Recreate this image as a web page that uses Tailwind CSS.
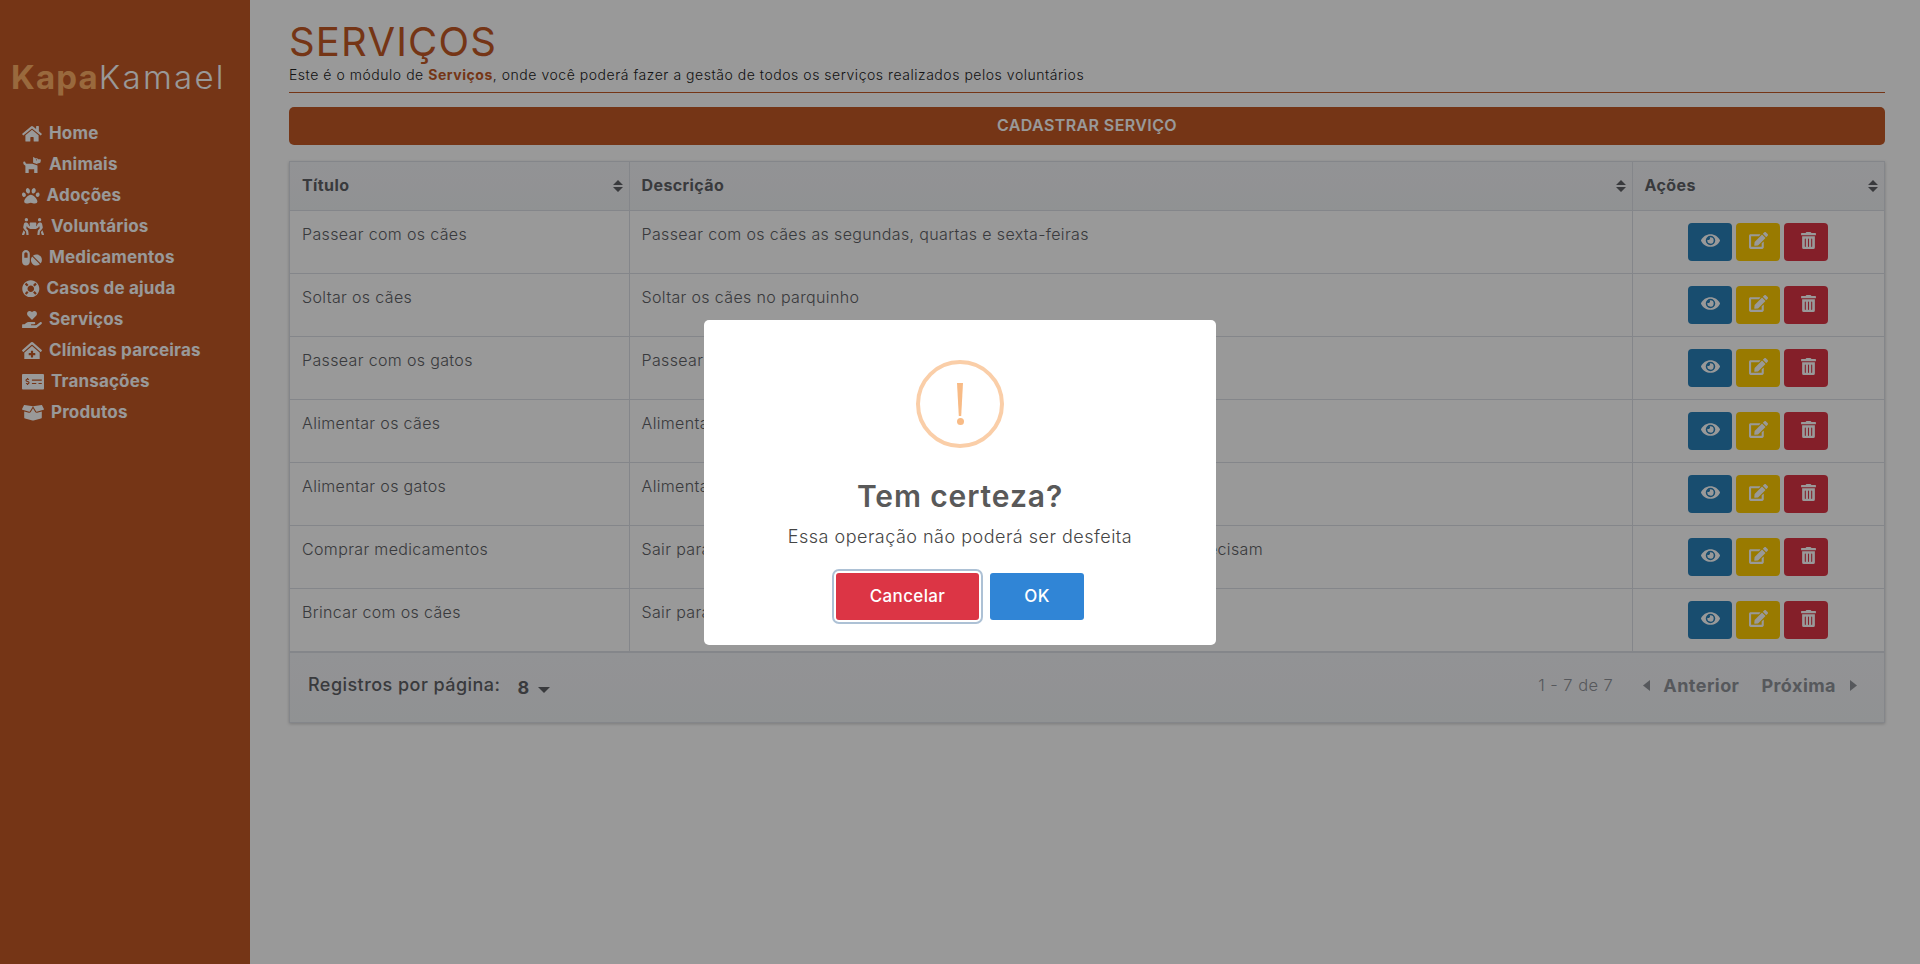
<!DOCTYPE html>
<html lang="pt-BR">
<head>
<meta charset="utf-8">
<title>Serviços</title>
<script src="https://cdn.jsdelivr.net/npm/@tailwindcss/browser@4"></script>
</head>
<body class="font-['Inter','Liberation_Sans',sans-serif] bg-white">
<svg class="hidden">
  <symbol id="eye" viewBox="0 0 576 512"><path d="M572.52 241.4C518.29 135.59 410.93 64 288 64S57.68 135.64 3.48 241.41a32.35 32.35 0 0 0 0 29.19C57.71 376.41 165.07 448 288 448s230.32-71.64 284.52-177.41a32.35 32.35 0 0 0 0-29.19zM288 400a144 144 0 1 1 144-144 143.93 143.93 0 0 1-144 144zm0-240a95.31 95.31 0 0 0-25.31 3.79 47.85 47.85 0 0 1-66.9 66.9A95.78 95.78 0 1 0 288 160z"/></symbol>
  <symbol id="edit" viewBox="0 0 576 512"><path d="M402.6 83.2l90.2 90.2c3.8 3.8 3.8 10 0 13.8L274.4 405.6l-92.8 10.3c-12.4 1.4-22.9-9.1-21.5-21.5l10.3-92.8L388.8 83.2c3.8-3.8 10-3.8 13.8 0zm162-22.9l-48.8-48.8c-15.2-15.2-39.9-15.2-55.2 0l-35.4 35.4c-3.8 3.8-3.8 10 0 13.8l90.2 90.2c3.8 3.8 10 3.8 13.8 0l35.4-35.4c15.2-15.3 15.2-40 0-55.2zM384 346.2V448H64V128h229.8c3.2 0 6.2-1.3 8.5-3.5l40-40c7.6-7.6 2.2-20.5-8.5-20.5H48C21.5 64 0 85.5 0 112v352c0 26.5 21.5 48 48 48h352c26.5 0 48-21.5 48-48V306.2c0-10.7-12.9-16-20.5-8.5l-40 40c-2.2 2.3-3.5 5.3-3.5 8.5z"/></symbol>
  <symbol id="trash" viewBox="0 0 448 512"><path d="M32 464a48 48 0 0 0 48 48h288a48 48 0 0 0 48-48V128H32zm272-256a16 16 0 0 1 32 0v224a16 16 0 0 1-32 0zm-96 0a16 16 0 0 1 32 0v224a16 16 0 0 1-32 0zm-96 0a16 16 0 0 1 32 0v224a16 16 0 0 1-32 0zM432 32H312l-9.4-18.7A24 24 0 0 0 281.1 0H166.8a23.72 23.72 0 0 0-21.4 13.3L136 32H16A16 16 0 0 0 0 48v32a16 16 0 0 0 16 16h416a16 16 0 0 0 16-16V48a16 16 0 0 0-16-16z"/></symbol>
  <symbol id="sort" viewBox="0 0 10 12"><path d="M5 0l5 5H0zM5 12L0 7h10z"/></symbol>
</svg>
<div class="relative flex h-[964px] w-[1920px] overflow-hidden">
  <aside class="w-[250px] shrink-0 bg-[#c35926] text-white">
    <div class="pl-[11px] pt-[55px] text-[33px] leading-[44px] tracking-[0.035em] h-[118px]"><span class="font-bold text-[#ffb066]">Kapa</span><span class="font-light tracking-[0.07em]">Kamael</span></div>
    <nav class="pl-[22px] text-[17px] font-bold tracking-[0.01em]">
      <a class="flex items-center h-[31px]"><svg class="h-[17.6px] w-[20px] fill-white" viewBox="0 0 576 512"><path d="M280.37 148.26L96 300.11V464a16 16 0 0 0 16 16l112.06-.29a16 16 0 0 0 15.92-16V368a16 16 0 0 1 16-16h64a16 16 0 0 1 16 16v95.64a16 16 0 0 0 16 16.05L464 480a16 16 0 0 0 16-16V300L295.67 148.26a12.19 12.19 0 0 0-15.3 0zM571.6 251.47L488 182.56V44.05a12 12 0 0 0-12-12h-56a12 12 0 0 0-12 12v72.61L318.47 43a48 48 0 0 0-61 0L4.34 251.47a12 12 0 0 0-1.6 16.9l25.5 31A12 12 0 0 0 45.15 301l235.22-193.74a12.19 12.19 0 0 1 15.3 0L530.9 301a12 12 0 0 0 16.9-1.6l25.5-31a12 12 0 0 0-1.7-16.93z"/></svg><span class="ml-[7px]">Home</span></a>
      <a class="flex items-center h-[31px]"><svg class="h-[17.6px] w-[20px] fill-white" viewBox="0 0 576 512"><path d="M298.06,224,448,277.55V496a16,16,0,0,1-16,16H368a16,16,0,0,1-16-16V384H192V496a16,16,0,0,1-16,16H112a16,16,0,0,1-16-16V282.09C58.84,268.84,32,233.66,32,192a32,32,0,0,1,64,0,32.06,32.06,0,0,0,32,32ZM544,112v32a64,64,0,0,1-64,64H448v35.58L320,197.87V48c0-14.25,17.22-21.39,27.31-11.31L374.59,64h53.63c10.91,0,23.75,7.92,28.62,17.69L464,96h64A16,16,0,0,1,544,112Zm-112,0a16,16,0,1,0-16,16A16,16,0,0,0,432,112Z"/></svg><span class="ml-[7px]">Animais</span></a>
      <a class="flex items-center h-[31px]"><svg class="h-[17.6px] w-[17.6px] fill-white" viewBox="0 0 512 512"><path d="M256 224c-79.41 0-192 122.76-192 200.25 0 34.9 26.81 55.75 71.74 55.75 48.84 0 81.09-25.08 120.26-25.08 39.51 0 71.85 25.08 120.26 25.08 44.93 0 71.74-20.85 71.74-55.75C448 346.76 335.41 224 256 224zm-147.28-12.61c-10.4-34.65-42.44-57.09-71.56-50.13-29.12 6.96-44.29 40.69-33.89 75.34 10.4 34.65 42.44 57.09 71.56 50.13 29.12-6.96 44.29-40.69 33.89-75.34zm84.72-20.78c30.94-8.14 46.42-49.94 34.58-93.36s-46.52-72.01-77.46-63.87-46.42 49.94-34.58 93.36c11.84 43.42 46.52 72.02 77.46 63.87zm281.39-29.34c-29.12-6.96-61.15 15.48-71.56 50.13-10.4 34.65 4.77 68.38 33.89 75.34 29.12 6.96 61.15-15.48 71.56-50.13 10.4-34.65-4.77-68.38-33.89-75.34zm-156.27 29.34c30.94 8.14 65.62-20.45 77.46-63.87 11.84-43.42-3.64-85.21-34.58-93.36s-65.62 20.45-77.46 63.87c-11.84 43.42 3.64 85.22 34.58 93.36z"/></svg><span class="ml-[7px]">Adoções</span></a>
      <a class="flex items-center h-[31px]"><svg class="h-[17.6px] w-[22px] fill-white" viewBox="0 0 640 512"><path d="M128 96c26.5 0 48-21.5 48-48S154.5 0 128 0 80 21.5 80 48s21.5 48 48 48zm384 0c26.5 0 48-21.5 48-48S538.5 0 512 0s-48 21.5-48 48 21.5 48 48 48zm125.7 372.1l-44-110-41.1 46.4-2 18.2 27.7 69.2c5 12.5 17 20.1 29.7 20.1 4 0 8-.7 11.9-2.3 16.4-6.6 24.4-25.2 17.8-41.6zm-34.2-209.8L585 178.1c-4.6-20-18.6-36.8-37.5-44.9-18.5-8-39-6.7-56.1 3.3-22.7 13.4-39.7 34.5-48.1 59.4L432 229.8 416 240v-96c0-8.8-7.2-16-16-16H240c-8.8 0-16 7.2-16 16v96l-16.1-10.2-11.3-33.9c-8.3-25-25.4-46-48.1-59.4-17.2-10-37.6-11.3-56.1-3.3-18.9 8.1-32.9 24.9-37.5 44.9l-18.4 80.2c-4.6 20 .7 41.2 14.4 56.7l67.2 75.9 10.1 92.6C130 499.8 143.8 512 160 512c1.2 0 2.3-.1 3.5-.2 17.6-1.9 30.2-17.7 28.3-35.3l-10.1-92.8c-1.5-13-6.9-25.1-15.6-35l-43.3-49 17.6-70.3 6.8 20.4c4.1 12.5 11.9 23.4 24.5 32.6l51.1 32.5c4.6 2.9 12.1 4.6 17.2 5h160c5.1-.4 12.6-2.1 17.2-5l51.1-32.5c12.6-9.2 20.4-20 24.5-32.6l6.8-20.4 17.6 70.3-43.3 49c-8.7 9.9-14.1 22-15.6 35l-10.1 92.8c-1.9 17.6 10.7 33.4 28.3 35.3 1.2.1 2.3.2 3.5.2 16.1 0 29.9-12.2 31.8-28.5l10.1-92.6 67.2-75.9c13.6-15.5 19-36.7 14.4-56.7zM46.3 358.1l-44 110c-6.6 16.4 1.4 35 17.8 41.6 16.8 6.6 35.1-1.7 41.6-17.8l27.7-69.2-2-18.2-41.1-46.4z"/></svg><span class="ml-[7px]">Voluntários</span></a>
      <a class="flex items-center h-[31px]"><svg class="h-[17.6px] w-[20px] fill-white" viewBox="0 0 576 512"><path d="M112 32C50.1 32 0 82.1 0 144v224c0 61.9 50.1 112 112 112s112-50.1 112-112V144c0-61.9-50.1-112-112-112zm48 224H64V144c0-26.5 21.5-48 48-48s48 21.5 48 48v112zm139.7-29.7c-3.5-3.5-9.4-3.1-12.3.8-45.3 62.5-40.4 150.1 15.9 206.4 56.3 56.3 143.9 61.2 206.4 15.9 4-2.9 4.3-8.8.8-12.3L299.7 226.3zm229.8-19c-56.3-56.3-143.9-61.2-206.4-15.9-4 2.9-4.3 8.8-.8 12.3l210.8 210.8c3.5 3.5 9.4 3.1 12.3-.8 45.3-62.6 40.5-150.1-15.9-206.4z"/></svg><span class="ml-[7px]">Medicamentos</span></a>
      <a class="flex items-center h-[31px]"><svg class="h-[17.6px] w-[17.6px] fill-white" viewBox="0 0 512 512"><path d="M256 8C119.033 8 8 119.033 8 256s111.033 248 248 248 248-111.033 248-248S392.967 8 256 8zm173.696 119.559l-63.399 63.399c-10.987-18.559-26.67-34.252-45.255-45.255l63.399-63.399a218.396 218.396 0 0 1 45.255 45.255zM256 352c-53.019 0-96-42.981-96-96s42.981-96 96-96 96 42.981 96 96-42.981 96-96 96zM127.559 82.304l63.399 63.399c-18.559 10.987-34.252 26.67-45.255 45.255l-63.399-63.399a218.372 218.372 0 0 1 45.255-45.255zM82.304 384.441l63.399-63.399c10.987 18.559 26.67 34.252 45.255 45.255l-63.399 63.399a218.396 218.396 0 0 1-45.255-45.255zm302.137 45.255l-63.399-63.399c18.559-10.987 34.252-26.67 45.255-45.255l63.399 63.399a218.403 218.403 0 0 1-45.255 45.255z"/></svg><span class="ml-[7px]">Casos de ajuda</span></a>
      <a class="flex items-center h-[31px]"><svg class="h-[17.6px] w-[20px] fill-white" viewBox="0 0 576 512"><path d="M275.3 250.5c7 7.4 18.4 7.4 25.5 0l108.9-114.2c31.6-33.2 29.8-88.2-5.6-118.8-30.8-26.7-76.7-21.9-104.9 7.7L288 36.9l-11.1-11.6C248.7-4.4 202.8-9.2 172 17.5c-35.3 30.6-37.2 85.6-5.6 118.8l108.9 114.2zm290 77.6c-11.8-10.7-30.2-10-42.6 0L430.3 402c-11.3 9.1-25.4 14-40 14H272c-8.8 0-16-7.2-16-16s7.2-16 16-16h78.3c15.9 0 30.7-10.9 33.3-26.6 3.3-20-12.1-37.4-31.6-37.4H192c-27 0-53.1 9.3-74.1 26.3L71.4 384H16c-8.8 0-16 7.2-16 16v96c0 8.8 7.2 16 16 16h356.8c14.5 0 28.6-4.9 40-14l151.2-121c15.2-12.1 16.4-35 1.3-48.9z"/></svg><span class="ml-[7px]">Serviços</span></a>
      <a class="flex items-center h-[31px]"><svg class="h-[17.6px] w-[20px] fill-white" viewBox="0 0 576 512"><path d="M288 115L69.47 307.71c-1.62 1.46-3.69 2.14-5.47 3.35V496a16 16 0 0 0 16 16h416a16 16 0 0 0 16-16V311.1c-1.7-1.16-3.72-1.82-5.26-3.2zm96 261a8 8 0 0 1-8 8h-56v56a8 8 0 0 1-8 8h-48a8 8 0 0 1-8-8v-56h-56a8 8 0 0 1-8-8v-48a8 8 0 0 1 8-8h56v-56a8 8 0 0 1 8-8h48a8 8 0 0 1 8 8v56h56a8 8 0 0 1 8 8zm186.69-139.72l-255.94-226a39.85 39.85 0 0 0-53.45 0l-256 226a16 16 0 0 0-1.21 22.6L25.5 282.7a16 16 0 0 0 22.6 1.21L277.42 81.63a16 16 0 0 1 21.17 0L527.91 283.9a16 16 0 0 0 22.6-1.21l21.4-23.82a16 16 0 0 0-1.22-22.59z"/></svg><span class="ml-[7px]">Clínicas parceiras</span></a>
      <a class="flex items-center h-[31px]"><svg class="h-[17.6px] w-[22px] fill-white" viewBox="0 0 640 512"><path d="M608 32H32C14.33 32 0 46.33 0 64v384c0 17.67 14.33 32 32 32h576c17.67 0 32-14.33 32-32V64c0-17.67-14.33-32-32-32zM176 327.88V344c0 4.42-3.58 8-8 8h-16c-4.42 0-8-3.58-8-8v-16.29c-11.29-.58-22.27-4.52-31.37-11.35-3.9-2.93-4.1-8.77-.57-12.14l11.75-11.21c2.77-2.64 6.89-2.76 10.13-.73 3.87 2.42 8.26 3.72 12.82 3.72h28.11c6.5 0 11.8-5.92 11.8-13.19 0-5.95-3.61-11.19-8.77-12.73l-45-13.5c-18.59-5.58-31.58-23.42-31.58-43.39 0-24.52 19.05-44.44 42.67-45.07V152c0-4.42 3.58-8 8-8h16c4.42 0 8 3.58 8 8v16.29c11.29.58 22.27 4.51 31.37 11.35 3.9 2.93 4.1 8.77.57 12.14l-11.75 11.21c-2.77 2.64-6.89 2.76-10.13.73-3.87-2.43-8.26-3.72-12.82-3.72h-28.11c-6.5 0-11.8 5.92-11.8 13.19 0 5.95 3.61 11.19 8.77 12.73l45 13.5c18.59 5.58 31.58 23.42 31.58 43.39 0 24.53-19.05 44.44-42.67 45.07zM416 312c0 4.42-3.58 8-8 8H296c-4.42 0-8-3.58-8-8v-16c0-4.42 3.58-8 8-8h112c4.42 0 8 3.58 8 8v16zm160 0c0 4.42-3.58 8-8 8h-80c-4.42 0-8-3.58-8-8v-16c0-4.42 3.58-8 8-8h80c4.42 0 8 3.58 8 8v16zm0-96c0 4.42-3.58 8-8 8H296c-4.42 0-8-3.58-8-8v-16c0-4.42 3.58-8 8-8h272c4.42 0 8 3.58 8 8v16z"/></svg><span class="ml-[7px]">Transações</span></a>
      <a class="flex items-center h-[31px]"><svg class="h-[17.6px] w-[22px] fill-white" viewBox="0 0 640 512"><path d="M425.7 256c-16.9 0-32.8-9-41.4-23.4L320 126l-64.2 106.6c-8.7 14.5-24.6 23.5-41.5 23.5-4.5 0-9-.6-13.3-1.9L64 215v178c0 14.7 10 27.5 24.2 31l216.2 54.1c10.2 2.5 20.9 2.5 31 0L551.8 424c14.2-3.6 24.2-16.4 24.2-31V215l-137 39.1c-4.3 1.3-8.8 1.9-13.3 1.9zm212.6-112.2L586.8 41c-3.1-6.2-9.8-9.8-16.7-8.9L320 64l91.7 152.1c3.8 6.3 11.4 9.3 18.5 7.3l197.9-56.5c9.9-2.9 14.7-13.9 10.2-23.1zM53.2 41L1.7 143.8c-4.6 9.2.3 20.2 10.1 23l197.9 56.5c7.1 2 14.7-1 18.5-7.3L320 64 69.8 32.1c-6.9-.8-13.5 2.7-16.6 8.9z"/></svg><span class="ml-[7px]">Produtos</span></a>
    </nav>
  </aside>

  <main class="flex-1 pl-[39px] pr-[35px]">
    <h1 class="pt-[20px] text-[40px] leading-[44px] font-normal text-[#c35926] tracking-[0.03em]">SERVIÇOS</h1>
    <p class="pt-[1px] text-[14px] leading-[20px] font-light text-[#222] tracking-[0.038em] h-[28px]">Este é o módulo de <b class="font-bold text-[#c35926]">Serviços</b>, onde você poderá fazer a gestão de todos os serviços realizados pelos voluntários</p>
    <div class="border-t border-[#c35926]"></div>
    <button class="mt-[14px] block w-full h-[38px] pb-[2px] rounded-[5px] bg-[#c35926] text-white font-semibold text-[16px] tracking-[0.025em]">CADASTRAR SERVIÇO</button>

    <div class="mt-[16px] border border-[#dcdfe6] shadow-[0_1px_3px_rgba(0,0,0,0.2)] text-[#606266] text-[16px] tracking-[0.022em]">
      <table class="w-full table-fixed border-collapse">
        <colgroup><col class="w-[339px]"><col><col class="w-[252px]"></colgroup>
        <thead>
          <tr class="h-[48px] bg-linear-to-b from-[#f4f5f8] to-[#f1f3f6] text-left tracking-[0.025em]">
            <th class="relative pl-[12px] pb-[2px] border-b border-r border-[#dcdfe6] font-bold">Título<svg class="absolute right-[6px] top-[18px] w-[10px] h-[12px] fill-[#606266]"><use href="#sort"/></svg></th>
            <th class="relative pl-[12px] pb-[2px] border-b border-r border-[#dcdfe6] font-bold">Descrição<svg class="absolute right-[6px] top-[18px] w-[10px] h-[12px] fill-[#606266]"><use href="#sort"/></svg></th>
            <th class="relative pl-[12px] pb-[2px] border-b border-[#dcdfe6] font-bold">Ações<svg class="absolute right-[6px] top-[18px] w-[10px] h-[12px] fill-[#606266]"><use href="#sort"/></svg></th>
          </tr>
        </thead>
        <tbody class="font-light">
          <tr class="h-[63px]"><td class="align-top pt-[11px] pl-[12px] border-b border-r border-[#dcdfe6]">Passear com os cães</td><td class="align-top pt-[11px] pl-[12px] border-b border-r border-[#dcdfe6]">Passear com os cães as segundas, quartas e sexta-feiras</td><td class="border-b border-[#dcdfe6]"><div class="flex justify-center gap-[4px]"><span class="flex items-center justify-center w-[44px] h-[38px] rounded-[4px] bg-[#2980b9]"><svg class="w-[19px] h-[17px] fill-white mb-[2px]"><use href="#eye"/></svg></span><span class="flex items-center justify-center w-[44px] h-[38px] rounded-[4px] bg-[#ffcc00]"><svg class="w-[19px] h-[17px] fill-white mb-[2px]"><use href="#edit"/></svg></span><span class="flex items-center justify-center w-[44px] h-[38px] rounded-[4px] bg-[#dc3545]"><svg class="w-[15px] h-[17px] fill-white mb-[2px] ml-[4px]"><use href="#trash"/></svg></span></div></td></tr>
          <tr class="h-[63px]"><td class="align-top pt-[11px] pl-[12px] border-b border-r border-[#dcdfe6]">Soltar os cães</td><td class="align-top pt-[11px] pl-[12px] border-b border-r border-[#dcdfe6]">Soltar os cães no parquinho</td><td class="border-b border-[#dcdfe6]"><div class="flex justify-center gap-[4px]"><span class="flex items-center justify-center w-[44px] h-[38px] rounded-[4px] bg-[#2980b9]"><svg class="w-[19px] h-[17px] fill-white mb-[2px]"><use href="#eye"/></svg></span><span class="flex items-center justify-center w-[44px] h-[38px] rounded-[4px] bg-[#ffcc00]"><svg class="w-[19px] h-[17px] fill-white mb-[2px]"><use href="#edit"/></svg></span><span class="flex items-center justify-center w-[44px] h-[38px] rounded-[4px] bg-[#dc3545]"><svg class="w-[15px] h-[17px] fill-white mb-[2px] ml-[4px]"><use href="#trash"/></svg></span></div></td></tr>
          <tr class="h-[63px]"><td class="align-top pt-[11px] pl-[12px] border-b border-r border-[#dcdfe6]">Passear com os gatos</td><td class="align-top pt-[11px] pl-[12px] border-b border-r border-[#dcdfe6]">Passear com os gatos no jardim</td><td class="border-b border-[#dcdfe6]"><div class="flex justify-center gap-[4px]"><span class="flex items-center justify-center w-[44px] h-[38px] rounded-[4px] bg-[#2980b9]"><svg class="w-[19px] h-[17px] fill-white mb-[2px]"><use href="#eye"/></svg></span><span class="flex items-center justify-center w-[44px] h-[38px] rounded-[4px] bg-[#ffcc00]"><svg class="w-[19px] h-[17px] fill-white mb-[2px]"><use href="#edit"/></svg></span><span class="flex items-center justify-center w-[44px] h-[38px] rounded-[4px] bg-[#dc3545]"><svg class="w-[15px] h-[17px] fill-white mb-[2px] ml-[4px]"><use href="#trash"/></svg></span></div></td></tr>
          <tr class="h-[63px]"><td class="align-top pt-[11px] pl-[12px] border-b border-r border-[#dcdfe6]">Alimentar os cães</td><td class="align-top pt-[11px] pl-[12px] border-b border-r border-[#dcdfe6]">Alimentar os cães</td><td class="border-b border-[#dcdfe6]"><div class="flex justify-center gap-[4px]"><span class="flex items-center justify-center w-[44px] h-[38px] rounded-[4px] bg-[#2980b9]"><svg class="w-[19px] h-[17px] fill-white mb-[2px]"><use href="#eye"/></svg></span><span class="flex items-center justify-center w-[44px] h-[38px] rounded-[4px] bg-[#ffcc00]"><svg class="w-[19px] h-[17px] fill-white mb-[2px]"><use href="#edit"/></svg></span><span class="flex items-center justify-center w-[44px] h-[38px] rounded-[4px] bg-[#dc3545]"><svg class="w-[15px] h-[17px] fill-white mb-[2px] ml-[4px]"><use href="#trash"/></svg></span></div></td></tr>
          <tr class="h-[63px]"><td class="align-top pt-[11px] pl-[12px] border-b border-r border-[#dcdfe6]">Alimentar os gatos</td><td class="align-top pt-[11px] pl-[12px] border-b border-r border-[#dcdfe6]">Alimentar os gatos</td><td class="border-b border-[#dcdfe6]"><div class="flex justify-center gap-[4px]"><span class="flex items-center justify-center w-[44px] h-[38px] rounded-[4px] bg-[#2980b9]"><svg class="w-[19px] h-[17px] fill-white mb-[2px]"><use href="#eye"/></svg></span><span class="flex items-center justify-center w-[44px] h-[38px] rounded-[4px] bg-[#ffcc00]"><svg class="w-[19px] h-[17px] fill-white mb-[2px]"><use href="#edit"/></svg></span><span class="flex items-center justify-center w-[44px] h-[38px] rounded-[4px] bg-[#dc3545]"><svg class="w-[15px] h-[17px] fill-white mb-[2px] ml-[4px]"><use href="#trash"/></svg></span></div></td></tr>
          <tr class="h-[63px]"><td class="align-top pt-[11px] pl-[12px] border-b border-r border-[#dcdfe6]">Comprar medicamentos</td><td class="align-top pt-[11px] pl-[12px] border-b border-r border-[#dcdfe6]">Sair para ir comprar os medicamentos para todos os animais que mais precisam</td><td class="border-b border-[#dcdfe6]"><div class="flex justify-center gap-[4px]"><span class="flex items-center justify-center w-[44px] h-[38px] rounded-[4px] bg-[#2980b9]"><svg class="w-[19px] h-[17px] fill-white mb-[2px]"><use href="#eye"/></svg></span><span class="flex items-center justify-center w-[44px] h-[38px] rounded-[4px] bg-[#ffcc00]"><svg class="w-[19px] h-[17px] fill-white mb-[2px]"><use href="#edit"/></svg></span><span class="flex items-center justify-center w-[44px] h-[38px] rounded-[4px] bg-[#dc3545]"><svg class="w-[15px] h-[17px] fill-white mb-[2px] ml-[4px]"><use href="#trash"/></svg></span></div></td></tr>
          <tr class="h-[64px]"><td class="align-top pt-[11px] pl-[12px] border-b-2 border-r border-[#dcdfe6]">Brincar com os cães</td><td class="align-top pt-[11px] pl-[12px] border-b-2 border-r border-[#dcdfe6]">Sair para brincar com os cães no parquinho</td><td class="border-b-2 border-[#dcdfe6]"><div class="flex justify-center gap-[4px]"><span class="flex items-center justify-center w-[44px] h-[38px] rounded-[4px] bg-[#2980b9]"><svg class="w-[19px] h-[17px] fill-white mb-[2px]"><use href="#eye"/></svg></span><span class="flex items-center justify-center w-[44px] h-[38px] rounded-[4px] bg-[#ffcc00]"><svg class="w-[19px] h-[17px] fill-white mb-[2px]"><use href="#edit"/></svg></span><span class="flex items-center justify-center w-[44px] h-[38px] rounded-[4px] bg-[#dc3545]"><svg class="w-[15px] h-[17px] fill-white mb-[2px] ml-[4px]"><use href="#trash"/></svg></span></div></td></tr>
        </tbody>
      </table>
      <div class="flex items-center justify-between h-[69px] pl-[18px] pr-[27px] bg-linear-to-b from-[#f4f5f8] to-[#f1f3f6] text-[18px] tracking-[0.025em]">
        <div class="flex items-center font-medium"><span class="-mt-[6px]">Registros por página:</span><span class="ml-[17px] text-[18px] font-bold">8</span><svg class="ml-[8px] mt-[4px] w-[12px] h-[6px] fill-[#606266]" viewBox="0 0 12 6"><path d="M0 0h12L6 6z"/></svg></div>
        <div class="flex items-center -mt-[4px] text-[#909399]"><span class="font-light text-[16.5px]">1 - 7 de 7</span><svg class="ml-[30px] w-[7px] h-[11px] fill-[#909399]" viewBox="0 0 7 11"><path d="M7 0v11L0 5.5z"/></svg><span class="ml-[13px] font-bold">Anterior</span><span class="ml-[22px] font-bold">Próxima</span><svg class="ml-[14px] w-[7px] h-[11px] fill-[#909399]" viewBox="0 0 7 11"><path d="M0 0v11l7-5.5z"/></svg></div>
      </div>
    </div>
  </main>

  <div class="absolute inset-0 bg-black/40 flex items-start justify-center pt-[320px]">
    <div class="w-[512px] h-[325px] rounded-[5px] bg-white flex flex-col items-center">
      <div class="mt-[40px] flex flex-col items-center justify-center w-[88px] h-[88px] rounded-full border-4 border-[#facea8]">
        <span class="block w-[6px] h-[33px] bg-[#f8bb86] [clip-path:polygon(0_0,100%_0,70%_100%,30%_100%)]"></span>
        <span class="mt-[2px] block w-[7px] h-[7px] rounded-full bg-[#f8bb86]"></span>
      </div>
      <h2 class="mt-[28px] text-[30px] leading-[40px] font-semibold text-[#595959] tracking-[0.03em]">Tem certeza?</h2>
      <p class="mt-[9px] text-[18px] leading-[24px] font-light text-[#454545] tracking-[0.027em]">Essa operação não poderá ser desfeita</p>
      <div class="mt-[24px] flex gap-[11px]">
        <button class="w-[143px] h-[47px] rounded-[3px] bg-[#dc3545] text-white text-[17px] font-medium tracking-[0.02em] shadow-[0_0_0_2px_#fff,0_0_0_4px_rgba(50,100,150,0.4)]">Cancelar</button>
        <button class="w-[94px] h-[47px] rounded-[3px] bg-[#3085d6] text-white text-[17px] font-medium tracking-[0.02em]">OK</button>
      </div>
    </div>
  </div>
</div>
</body>
</html>
